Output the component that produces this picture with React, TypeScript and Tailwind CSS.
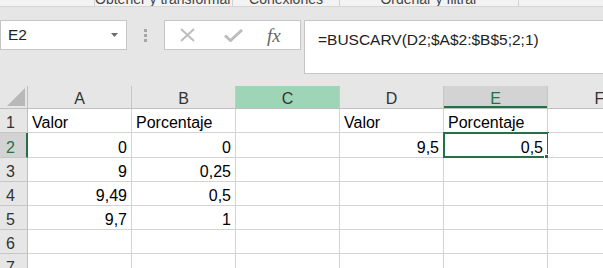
import React from "react";

type Cell = { text: string; align: "left" | "right" };

const COLS = ["A", "B", "C", "D", "E", "F"];

// filas de la hoja: altura incluye el borde inferior
const ROWS: { n: number; h: string; cells: Record<string, Cell> }[] = [
  {
    n: 1,
    h: "h-[24px]",
    cells: {
      A: { text: "Valor", align: "left" },
      B: { text: "Porcentaje", align: "left" },
      D: { text: "Valor", align: "left" },
      E: { text: "Porcentaje", align: "left" },
    },
  },
  {
    n: 2,
    h: "h-[25px]",
    cells: {
      A: { text: "0", align: "right" },
      B: { text: "0", align: "right" },
      D: { text: "9,5", align: "right" },
      E: { text: "0,5", align: "right" },
    },
  },
  { n: 3, h: "h-[24px]", cells: { A: { text: "9", align: "right" }, B: { text: "0,25", align: "right" } } },
  { n: 4, h: "h-[24px]", cells: { A: { text: "9,49", align: "right" }, B: { text: "0,5", align: "right" } } },
  { n: 5, h: "h-[24px]", cells: { A: { text: "9,7", align: "right" }, B: { text: "1", align: "right" } } },
  { n: 6, h: "h-[24px]", cells: {} },
  { n: 7, h: "h-[24px]", cells: {} },
];

function RibbonStrip() {
  const groups = [
    { label: "", w: "w-[95px]" },
    { label: "Obtener y transformar", w: "w-[138px]" },
    { label: "Conexiones", w: "w-[107px]" },
    { label: "Ordenar y filtrar", w: "w-[179px]" },
    { label: "", w: "flex-1" },
  ];
  return (
    <div className="h-[7px] bg-[#f3f3f3] border-b border-[#d5d5d5] flex overflow-hidden">
      {groups.map((g, i) => (
        <div
          key={i}
          className={`${g.w} shrink-0 h-full overflow-hidden ${i < groups.length - 1 ? "border-r border-[#d2d2d2]" : ""}`}
        >
          <div className="-mt-[8px] text-center text-[14px] leading-[14px] text-[#444] whitespace-nowrap">{g.label}</div>
        </div>
      ))}
    </div>
  );
}

function FormulaBar() {
  return (
    <div className="flex items-start pt-[13px] h-[79px]">
      <div className="w-[127px] h-[30px] shrink-0 bg-white border border-[#c6c6c6] flex items-center pl-[7px] pr-[8px]">
        <span className="text-[15.5px] text-[#222] flex-1">E2</span>
        <svg width="7" height="4" viewBox="0 0 7 4">
          <path d="M0 0 L7 0 L3.5 4 Z" fill="#6b6b6b" />
        </svg>
      </div>
      <div className="w-[37px] h-[30px] shrink-0 flex flex-col items-center justify-center gap-[2px]">
        <div className="w-[3px] h-[3px] bg-[#a6a6a6]" />
        <div className="w-[3px] h-[3px] bg-[#a6a6a6]" />
        <div className="w-[3px] h-[3px] bg-[#a6a6a6]" />
      </div>
      <div className="w-[137px] h-[30px] shrink-0 bg-white border border-[#c6c6c6] flex items-center pl-[15px]">
        <svg width="15" height="14" viewBox="0 0 15 14" className="mr-[29px]">
          <path d="M1 1 L14 13 M14 1 L1 13" stroke="#bdbdbd" strokeWidth="2" />
        </svg>
        <svg width="19" height="13" viewBox="0 0 19 13" className="mr-[24px]">
          <path d="M1 6.5 L6.5 11.5 L18 1" fill="none" stroke="#bdbdbd" strokeWidth="3" />
        </svg>
        <span className="font-['Liberation_Serif',serif] italic text-[19px] text-[#666] leading-none">fx</span>
      </div>
      <div className="ml-[3px] w-[320px] h-[54px] shrink-0 bg-white border border-[#c6c6c6] pl-[13px] pt-[7px]">
        <span className="text-[15.5px] text-[#222]">=BUSCARV(D2;$A$2:$B$5;2;1)</span>
      </div>
    </div>
  );
}

function HeaderRow() {
  return (
    <div className="flex h-[23px] border-b border-[#bfbfbf]">
      <div className="w-[28px] shrink-0 border-r border-[#bfbfbf] flex items-end justify-end pr-[2px] pb-[2px]">
        <svg width="18" height="18" viewBox="0 0 18 18">
          <path d="M18 0 L18 18 L0 18 Z" fill="#b8b8b8" />
        </svg>
      </div>
      {COLS.map((c) => {
        const tone =
          c === "C"
            ? "bg-[#9fd5b7] text-[#333]"
            : c === "E"
              ? "bg-[#d3d3d3] text-[#217346] shadow-[inset_0_-2px_0_#217346]"
              : "text-[#333]";
        return (
          <div
            key={c}
            className={`w-[104px] shrink-0 border-r border-[#c6c6c6] flex items-end justify-center leading-[18px] text-[16px] ${tone}`}
          >
            {c}
          </div>
        );
      })}
    </div>
  );
}

export default function App() {
  return (
    <div className="w-[603px] h-[268px] overflow-hidden bg-[#e6e6e6] font-['Liberation_Sans',Arial,sans-serif]">
      <RibbonStrip />
      <FormulaBar />
      <HeaderRow />
      {ROWS.map((r) => (
        <div key={r.n} className={`flex ${r.h}`}>
          <div
            className={`w-[28px] shrink-0 border-b border-[#c6c6c6] flex items-end pl-[6px] leading-[18px] text-[16px] ${
              r.n === 2
                ? "bg-[#d3d3d3] text-[#217346] border-r-2 border-r-[#217346]"
                : "text-[#333] border-r border-r-[#bfbfbf]"
            }`}
          >
            {r.n}
          </div>
          {COLS.map((c) => {
            const cell = r.cells[c];
            const selected = r.n === 2 && c === "E";
            return (
              <div
                key={c}
                className={`relative w-[104px] shrink-0 bg-white border-r border-b border-[#d4d4d4] flex items-end leading-[18px] text-[16px] text-black whitespace-nowrap ${
                  cell?.align === "right" ? "justify-end pr-[4px]" : "pl-[4px]"
                }`}
              >
                {cell?.text}
                {selected && (
                  <>
                    <div className="absolute -left-[1px] -top-[1px] w-[106px] h-[26px] border-2 border-[#217346]" />
                    <div className="absolute -right-[3px] -bottom-[3px] w-[6px] h-[6px] bg-[#217346] border border-white" />
                  </>
                )}
              </div>
            );
          })}
        </div>
      ))}
    </div>
  );
}
